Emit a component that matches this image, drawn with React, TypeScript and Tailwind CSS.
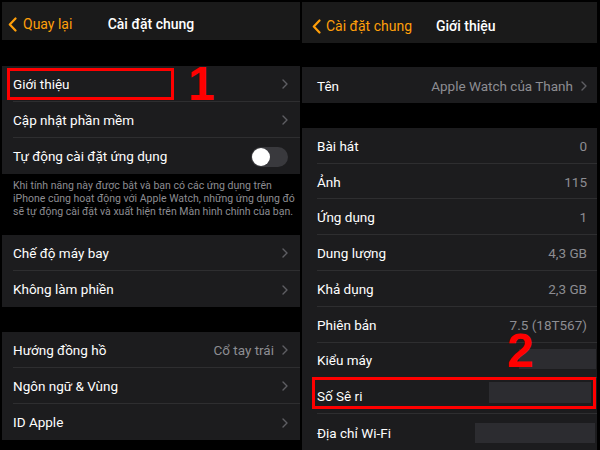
const font = { fontFamily: 'Roboto, "Noto Sans", sans-serif' };

function Chevron() {
  return (
    <svg width="6" height="10" viewBox="0 0 6 10" className="shrink-0">
      <path d="M1 1l4 4-4 4" fill="none" stroke="#5e5e63" strokeWidth="1.4" strokeLinecap="round" strokeLinejoin="round" />
    </svg>
  );
}

function BackChevron() {
  return (
    <svg width="9" height="15" viewBox="0 0 9 15" className="shrink-0">
      <path d="M7.5 1.5L1.8 7.5l5.7 6" fill="none" stroke="#ff9f0a" strokeWidth="2.2" strokeLinecap="round" strokeLinejoin="round" />
    </svg>
  );
}

type RowProps = {
  label: string;
  value?: string;
  chevron?: boolean;
  last?: boolean;
  children?: React.ReactNode;
};

function Row({ label, value, chevron, last, children }: RowProps) {
  return (
    <div className="relative flex h-[36px] items-center pl-[11px]">
      <div className={`flex h-full flex-1 items-center pr-[12px] pt-[1px] ${last ? '' : 'border-b border-[#2e2e30]'}`}>
        <span className="flex-1 text-[13.5px] text-white">{label}</span>
        {value && <span className="mr-[8px] text-[13.5px] text-[#8d8d92]">{value}</span>}
        {chevron && <Chevron />}
        {children}
      </div>
    </div>
  );
}

function InfoRow({ label, value, chevron, last, children }: RowProps) {
  return (
    <div className="relative flex h-[35.8px] items-center pl-[15px]">
      <div className={`flex h-full flex-1 items-center pr-[10px] pt-[2px] ${last ? '' : 'border-b border-[#2e2e30]'}`}>
        <span className="flex-1 text-[13.5px] leading-[15px] text-white">{label}</span>
        {value && (
          <span className={`text-[13.5px] leading-[15px] text-[#8d8d92] ${chevron ? 'mr-[8px]' : ''}`}>{value}</span>
        )}
        {chevron && <Chevron />}
      </div>
      {children}
    </div>
  );
}

function Toggle() {
  return (
    <div className="flex h-[20px] w-[37px] items-center rounded-full bg-[#39393d] p-[1px]">
      <div className="h-[18px] w-[18px] rounded-full bg-white" />
    </div>
  );
}

function Redacted({ cls }: { cls: string }) {
  return <div className={`absolute bg-[#2c2c30] ${cls}`} />;
}

export default function App() {
  return (
    <div className="relative flex h-[450px] w-[600px] overflow-hidden bg-black" style={font}>
      {/* left screen */}
      <div className="ml-[2px] flex w-[298px] flex-col pt-[2px]">
        <div className="relative flex h-[38px] items-center bg-[#1a1a1a] pt-[6px]">
          <div className="absolute left-[6px] flex items-center gap-[6px]">
            <BackChevron />
            <span className="text-[14px] text-[#ff9f0a]">Quay lại</span>
          </div>
          <span className="w-full text-center text-[14px] font-medium text-white">Cài đặt chung</span>
        </div>
        <div className="h-[26px]" />
        <div className="bg-[#1c1c1e]">
          <Row label="Giới thiệu" chevron>
            <div className="absolute left-[5px] top-[2px] h-[32px] w-[167px] border-[3px] border-[#ff0000]" />
          </Row>
          <Row label="Cập nhật phần mềm" chevron />
          <Row label="Tự động cài đặt ứng dụng" last>
            <Toggle />
          </Row>
        </div>
        <div className="h-[61px] whitespace-nowrap pl-[11px] pt-[5px] text-[10.5px] leading-[13px] text-[#8d8d92]">
          Khi tính năng này được bật và bạn có các ứng dụng trên
          <br />
          iPhone cũng hoạt động với Apple Watch, những ứng dụng đó
          <br />
          sẽ tự động cài đặt và xuất hiện trên Màn hình chính của bạn.
        </div>
        <div className="bg-[#1c1c1e]">
          <Row label="Chế độ máy bay" chevron />
          <Row label="Không làm phiền" chevron last />
        </div>
        <div className="h-[25px]" />
        <div className="bg-[#1c1c1e]">
          <Row label="Hướng đồng hồ" value="Cổ tay trái" chevron />
          <Row label="Ngôn ngữ & Vùng" chevron />
          <Row label="ID Apple" chevron last />
        </div>
      </div>

      {/* right screen */}
      <div className="ml-[2px] flex w-[295px] flex-col pt-[2px]">
        <div className="flex h-[41px] items-center bg-[#1a1a1a] pl-[10px] pt-[8px]">
          <BackChevron />
          <span className="ml-[5px] text-[14px] text-[#ff9f0a]">Cài đặt chung</span>
          <span className="ml-[24px] text-[14px] font-medium text-white">Giới thiệu</span>
        </div>
        <div className="h-[25px]" />
        <div className="bg-[#1c1c1e]">
          <InfoRow label="Tên" value="Apple Watch của Thanh" chevron last />
        </div>
        <div className="h-[25px]" />
        <div className="bg-[#1c1c1e]">
          <InfoRow label="Bài hát" value="0" />
          <InfoRow label="Ảnh" value="115" />
          <InfoRow label="Ứng dụng" value="1" />
          <InfoRow label="Dung lượng" value="4,3 GB" />
          <InfoRow label="Khả dụng" value="2,3 GB" />
          <InfoRow label="Phiên bản" value="7.5 (18T567)" />
          <InfoRow label="Kiểu máy">
            <Redacted cls="left-[217px] top-[6px] h-[20px] w-[77px]" />
          </InfoRow>
          <InfoRow label="Số Sê ri">
            <Redacted cls="left-[187px] top-[4px] h-[21px] w-[102px]" />
            <div className="absolute left-[10px] top-[-1px] h-[32px] w-[284px] border-[3px] border-[#ff0000]" />
          </InfoRow>
          <InfoRow label="Địa chỉ Wi-Fi" last>
            <Redacted cls="left-[173px] top-[9px] h-[20px] w-[120px]" />
          </InfoRow>
        </div>
      </div>

      <span
        className="absolute left-[188px] top-[66px] h-[35px] text-[48px] font-black leading-[35px] text-[#ff0000]"
        style={{ fontFamily: '"Liberation Sans", Arial, sans-serif' }}
      >
        1
      </span>
      <span
        className="absolute left-[507px] top-[333px] h-[35px] text-[48px] font-black leading-[35px] text-[#ff0000]"
        style={{ fontFamily: '"Liberation Sans", Arial, sans-serif' }}
      >
        2
      </span>
    </div>
  );
}
